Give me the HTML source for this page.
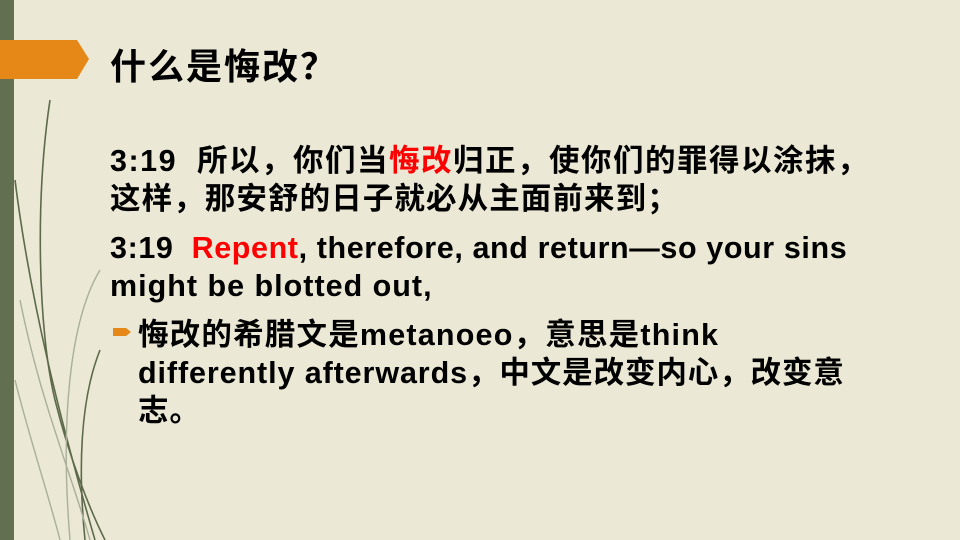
<html><head><style>
body{margin:0;width:960px;height:540px;background:#ebe8d6;position:relative;overflow:hidden;font-family:"Liberation Sans","Noto Sans CJK SC",sans-serif;color:#000}
.t{position:absolute;font-weight:bold;font-size:30.5px;line-height:36px;white-space:nowrap}
.r{color:#f00}
</style></head><body>
<div style="position:absolute;left:0;top:0;width:14px;height:540px;background:#636f51"></div>
<svg style="position:absolute;left:0;top:0" width="960" height="540">
<polygon points="0,40 77,40 89,59 77,79 0,79" fill="#e58818"/>
<g fill="none" stroke="#5d6a4a" stroke-width="1.6">
<path d="M50,100 C35,200 38,330 55,400 C70,460 90,510 105,540"/>
<path d="M15,180 C30,300 60,420 95,540"/>
<path d="M100,350 C80,400 78,470 85,540"/>
</g>
<g fill="none" stroke="#a9af98" stroke-width="1.4">
<path d="M20,300 C40,400 70,470 90,540"/>
<path d="M100,270 C70,320 60,420 70,540"/>
<path d="M15,380 C30,440 50,500 60,540"/>
</g>
<polygon points="113,328 126,328 131,332 126,336 113,336" fill="#e58818"/>
</svg>
<div class="t" style="left:110px;top:44px;font-size:36px;line-height:40px;letter-spacing:2px">什么是悔改<span style="font-family:'Noto Sans CJK SC',sans-serif">？</span></div>
<div class="t" style="left:110px;top:143px;letter-spacing:1.5px">3:19&nbsp; 所以，你们当<span class="r">悔改</span>归正，使你们的罪得以涂抹，</div>
<div class="t" style="left:110px;top:181px;letter-spacing:1.1px">这样，那安舒的日子就必从主面前来到；</div>
<div class="t" style="left:110px;top:230px;letter-spacing:0.6px">3:19&nbsp; <span class="r">Repent</span>, therefore, and return—so your sins</div>
<div class="t" style="left:110px;top:268px;letter-spacing:1px">might be blotted out,</div>
<div class="t" style="left:138px;top:317px;letter-spacing:1.2px">悔改的希腊文是metanoeo，意思是think</div>
<div class="t" style="left:138px;top:355px;letter-spacing:0.9px">differently afterwards，中文是改变内心，改变意</div>
<div class="t" style="left:138px;top:393px;letter-spacing:1px">志。</div>
</body></html>
